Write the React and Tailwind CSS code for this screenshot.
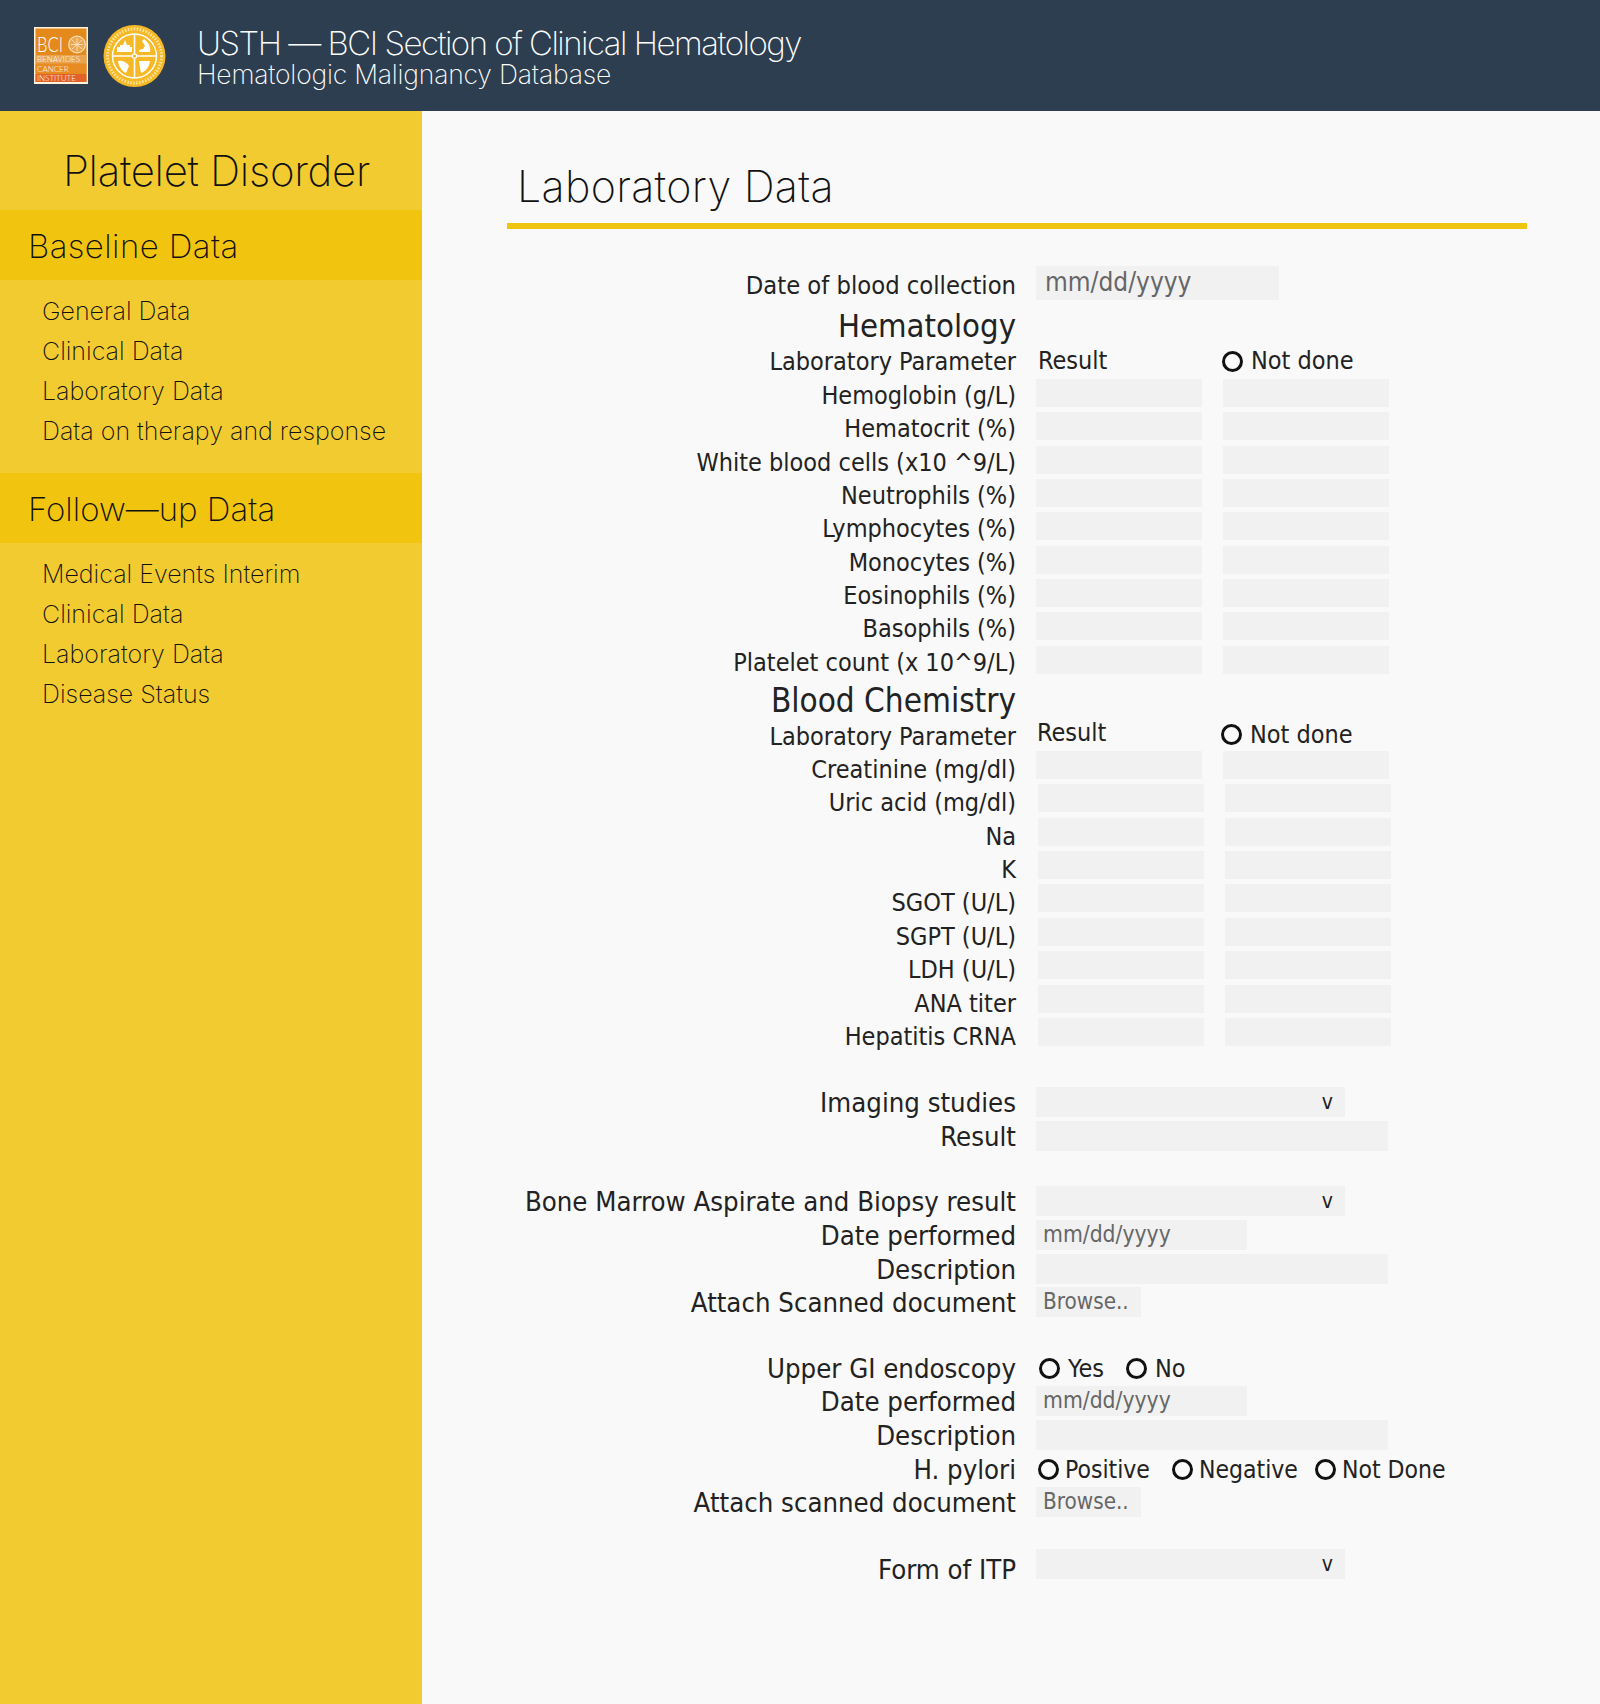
const Box = ({ className = "" }) => <div className={`bg-[#f1f1f1] ${className}`} />

function Radio({ label, className = "" }) {
  return (
    <span className={`flex items-center gap-[6px] ${className}`}>
      <span className="w-[21px] h-[21px] rounded-full border-[3px] border-[#111] shrink-0" />
      {label}
    </span>
  )
}

function Label({ children, className = "" }) {
  return <div className={`w-[509px] shrink-0 text-right whitespace-nowrap ${className}`}>{children}</div>
}

function LabRow({ label, shift = false, chem = false }) {
  return (
    <div className="flex h-[33.35px] text-[25px] leading-[30px] items-start">
      <Label className={chem ? "pt-[4px]" : "pt-[2px]"}>{label}</Label>
      <div className={`flex gap-[21px] ${shift ? "ml-[22px]" : "ml-[20px]"}`}>
        <Box className="w-[166px] h-[28px]" />
        <Box className="w-[166px] h-[28px]" />
      </div>
    </div>
  )
}

function BigRow({ label, children, labelClass = "" }) {
  return (
    <div className="flex items-start text-[27.3px] leading-[32px] h-[33.6px]">
      <Label className={labelClass}>{label}</Label>
      <div className="ml-[20px]">{children}</div>
    </div>
  )
}

const Select = () => (
  <div className="w-[309px] h-[30px] bg-[#f1f1f1] flex items-center justify-end pr-[12px] text-[21px] text-[#222]">v</div>
)

const DateBox = () => (
  <div className="w-[211px] h-[30px] bg-[#f1f1f1] pl-[7px] text-[22.7px] leading-[28px] text-[#666]">mm/dd/yyyy</div>
)

const Browse = () => (
  <div className="w-[105px] h-[30px] bg-[#f1f1f1] pl-[7px] text-[22.3px] leading-[28px] text-[#666]">Browse..</div>
)

const WideBox = () => <div className="w-[352px] h-[30px] bg-[#f1f1f1]" />

function Logos() {
  return (
    <div className="flex items-center gap-[15px]">
      <svg viewBox="0 0 54 57" className="w-[54px] h-[57px]">
        <rect width="54" height="57" fill="#fdf3dc" />
        <rect x="1.5" y="1.5" width="51" height="53.5" fill="#e48a1c" />
        <rect x="1.5" y="28" width="51" height="8.5" fill="#e9a452" />
        <rect x="1.5" y="37" width="51" height="9" fill="#e78b22" />
        <rect x="1.5" y="47" width="51" height="8" fill="#e2622a" />
        <text x="3" y="25" fontSize="21" fill="#fff" fontFamily="Lato" fontWeight="300" textLength="26" lengthAdjust="spacingAndGlyphs">BCI</text>
        <circle cx="43" cy="17.5" r="8.3" fill="#eda64e" stroke="#f8dfb8" strokeWidth="1.2" />
        <path d="M38 13l10 9M48 13l-10 9M43 11v13M37 17.5h12" stroke="#f8dfb8" strokeWidth="1" />
        <text x="3" y="35" fontSize="8" fill="#fff" fontFamily="Lato" fontWeight="300">BENAVIDES</text>
        <text x="3" y="44.5" fontSize="8" fill="#fff" fontFamily="Lato" fontWeight="300">CANCER</text>
        <text x="3" y="53.5" fontSize="8" fill="#fff" fontFamily="Lato" fontWeight="300">INSTITUTE</text>
      </svg>
      <svg viewBox="0 0 63 62" className="w-[63px] h-[62px]">
        <circle cx="31.5" cy="31" r="31" fill="#f6b925" />
        <circle cx="31.5" cy="31" r="27" fill="none" stroke="#fde3a0" strokeWidth="3" strokeDasharray="1.5 1.5" />
        <circle cx="31.5" cy="31" r="22" fill="none" stroke="#fff" strokeWidth="1.4" />
        <path d="M31.5 9v44M9.5 31h44" stroke="#fff" strokeWidth="1.6" />
        <circle cx="31.5" cy="31" r="2.2" fill="#f6b925" stroke="#fff" strokeWidth="1.2" />
        <path d="M14 27v-5h3v-2h3l2-5 2 5h3v2h2v5z" fill="#fff" />
        <path d="M36 27h11c1-5-1-9-6-13l-2 2 3 5-2 3-4 1z" fill="#fff" />
        <path d="M15 36c4-1 9 1 11 5l-3 7c-4-2-7-6-8-12z" fill="#fff" />
        <path d="M36 36h11c-1 6-4 10-9 12l-1-5z" fill="#fff" />
      </svg>
    </div>
  )
}

function SideSection({ title, items, className = "", titleClass = "" }) {
  return (
    <div className={className}>
      <div className={`h-[70px] bg-[#f1c40f] pl-[28px] text-[33px] leading-[72px] ${titleClass}`}>{title}</div>
      <ul className="pt-[11px] pl-[42px] text-[25px] leading-[40px] tracking-[0px]">
        {items.map((i) => <li key={i} className="whitespace-nowrap">{i}</li>)}
      </ul>
    </div>
  )
}

export default function App() {
  return (
    <div className="w-[1600px] h-[1704px] flex flex-col bg-[#f9f9f9] text-[#222] font-['DejaVu_Sans_Condensed','DejaVu_Sans',sans-serif] overflow-hidden">
      <header className="h-[111px] shrink-0 bg-[#2c3e50] flex items-center pl-[34px] gap-[31px]">
        <Logos />
        <div className="font-['Inter',sans-serif] font-extralight text-white whitespace-nowrap">
          <div className="text-[33px] leading-[36px] tracking-[-1.5px]">USTH — BCI Section of Clinical Hematology</div>
          <div className="text-[26.5px] leading-[26px] tracking-[-0.2px]">Hematologic Malignancy Database</div>
        </div>
      </header>

      <div className="flex flex-1">
        <aside className="w-[422px] bg-[#f2cb30] font-['Inter',sans-serif] font-extralight text-[#111]">
          <div className="h-[99px] text-center text-[42px] leading-[120px] pl-[11px] tracking-[-0.3px]">Platelet Disorder</div>
          <SideSection title="Baseline Data" titleClass="tracking-[0.4px]" items={["General Data", "Clinical Data", "Laboratory Data", "Data on therapy and response"]} />
          <SideSection className="mt-[22px]" title="Follow—up Data" items={["Medical Events Interim", "Clinical Data", "Laboratory Data", "Disease Status"]} />
        </aside>

        <main className="flex-1 pl-[85px]">
          <div className="w-[1020px] h-[118px] border-b-[6px] border-[#f1c40f] pl-[10px] font-['Inter',sans-serif] font-extralight text-[43px] leading-[150px] tracking-[0.3px] text-[#111]">Laboratory Data</div>

          <div className="mt-[37px]">
            <div className="flex items-start h-[34px]">
              <Label className="text-[25.3px] leading-[34px] pt-[3px]">Date of blood collection</Label>
              <div className="ml-[20px] w-[243px] h-[34px] bg-[#f1f1f1] pl-[9px] text-[26px] leading-[32px] text-[#666]">mm/dd/yyyy</div>
            </div>
            <div className="flex h-[43px] items-end">
              <Label className="text-[32.6px] leading-[40px] font-medium translate-y-[3px]">Hematology</Label>
            </div>
            <div className="flex h-[36px] text-[25px] leading-[36px]">
              <Label className="pt-[1px]">Laboratory Parameter</Label>
              <div className="ml-[22px] w-[184px]">Result</div>
              <Radio label="Not done" className="gap-[8px]" />
            </div>
            {["Hemoglobin (g/L)", "Hematocrit (%)", "White blood cells (x10 ^9/L)", "Neutrophils (%)", "Lymphocytes (%)", "Monocytes (%)", "Eosinophils (%)", "Basophils (%)", "Platelet count (x 10^9/L)"].map((l) => (
              <LabRow key={l} label={l} />
            ))}

            <div className="flex h-[41px] items-end">
              <Label className="text-[33px] leading-[40px] font-medium translate-y-[1px]">Blood Chemistry</Label>
            </div>
            <div className="flex h-[31px] text-[25px] leading-[30px]">
              <Label className="pt-[2px]">Laboratory Parameter</Label>
              <div className="ml-[21px] w-[184px] -mt-[2px]">Result</div>
              <Radio label="Not done" className="-mt-[2px] gap-[8px]" />
            </div>
            <LabRow label="Creatinine (mg/dl)" chem />
            {["Uric acid (mg/dl)", "Na", "K", "SGOT (U/L)", "SGPT (U/L)", "LDH (U/L)", "ANA titer"].map((l) => (
              <LabRow key={l} label={l} shift chem />
            ))}
            <LabRow label="Hepatitis CRNA" shift chem />
          </div>

          <div className="mt-[36px]">
            <BigRow label="Imaging studies"><Select /></BigRow>
            <BigRow label="Result"><WideBox /></BigRow>
          </div>

          <div className="mt-[32px]">
            <BigRow label="Bone Marrow Aspirate and Biopsy result"><Select /></BigRow>
            <BigRow label="Date performed"><DateBox /></BigRow>
            <BigRow label="Description"><WideBox /></BigRow>
            <BigRow label="Attach Scanned document"><Browse /></BigRow>
          </div>

          <div className="mt-[32px]">
            <BigRow label="Upper GI endoscopy">
              <div className="flex gap-[22px] ml-[3px] text-[25px]">
                <Radio label="Yes" className="gap-[8px]" />
                <Radio label="No" className="gap-[8px]" />
              </div>
            </BigRow>
            <BigRow label="Date performed"><DateBox /></BigRow>
            <BigRow label="Description"><WideBox /></BigRow>
            <BigRow label="H. pylori">
              <div className="flex ml-[2px] text-[24.5px]">
                <Radio label="Positive" className="w-[134px]" />
                <Radio label="Negative" className="w-[143px] gap-[0px]" />
                <Radio label="Not Done" className="gap-[2px]" />
              </div>
            </BigRow>
            <BigRow label="Attach scanned document"><Browse /></BigRow>
          </div>

          <div className="mt-[28px]">
            <BigRow label="Form of ITP" labelClass="pt-[5px]"><Select /></BigRow>
          </div>
        </main>
      </div>
    </div>
  )
}
